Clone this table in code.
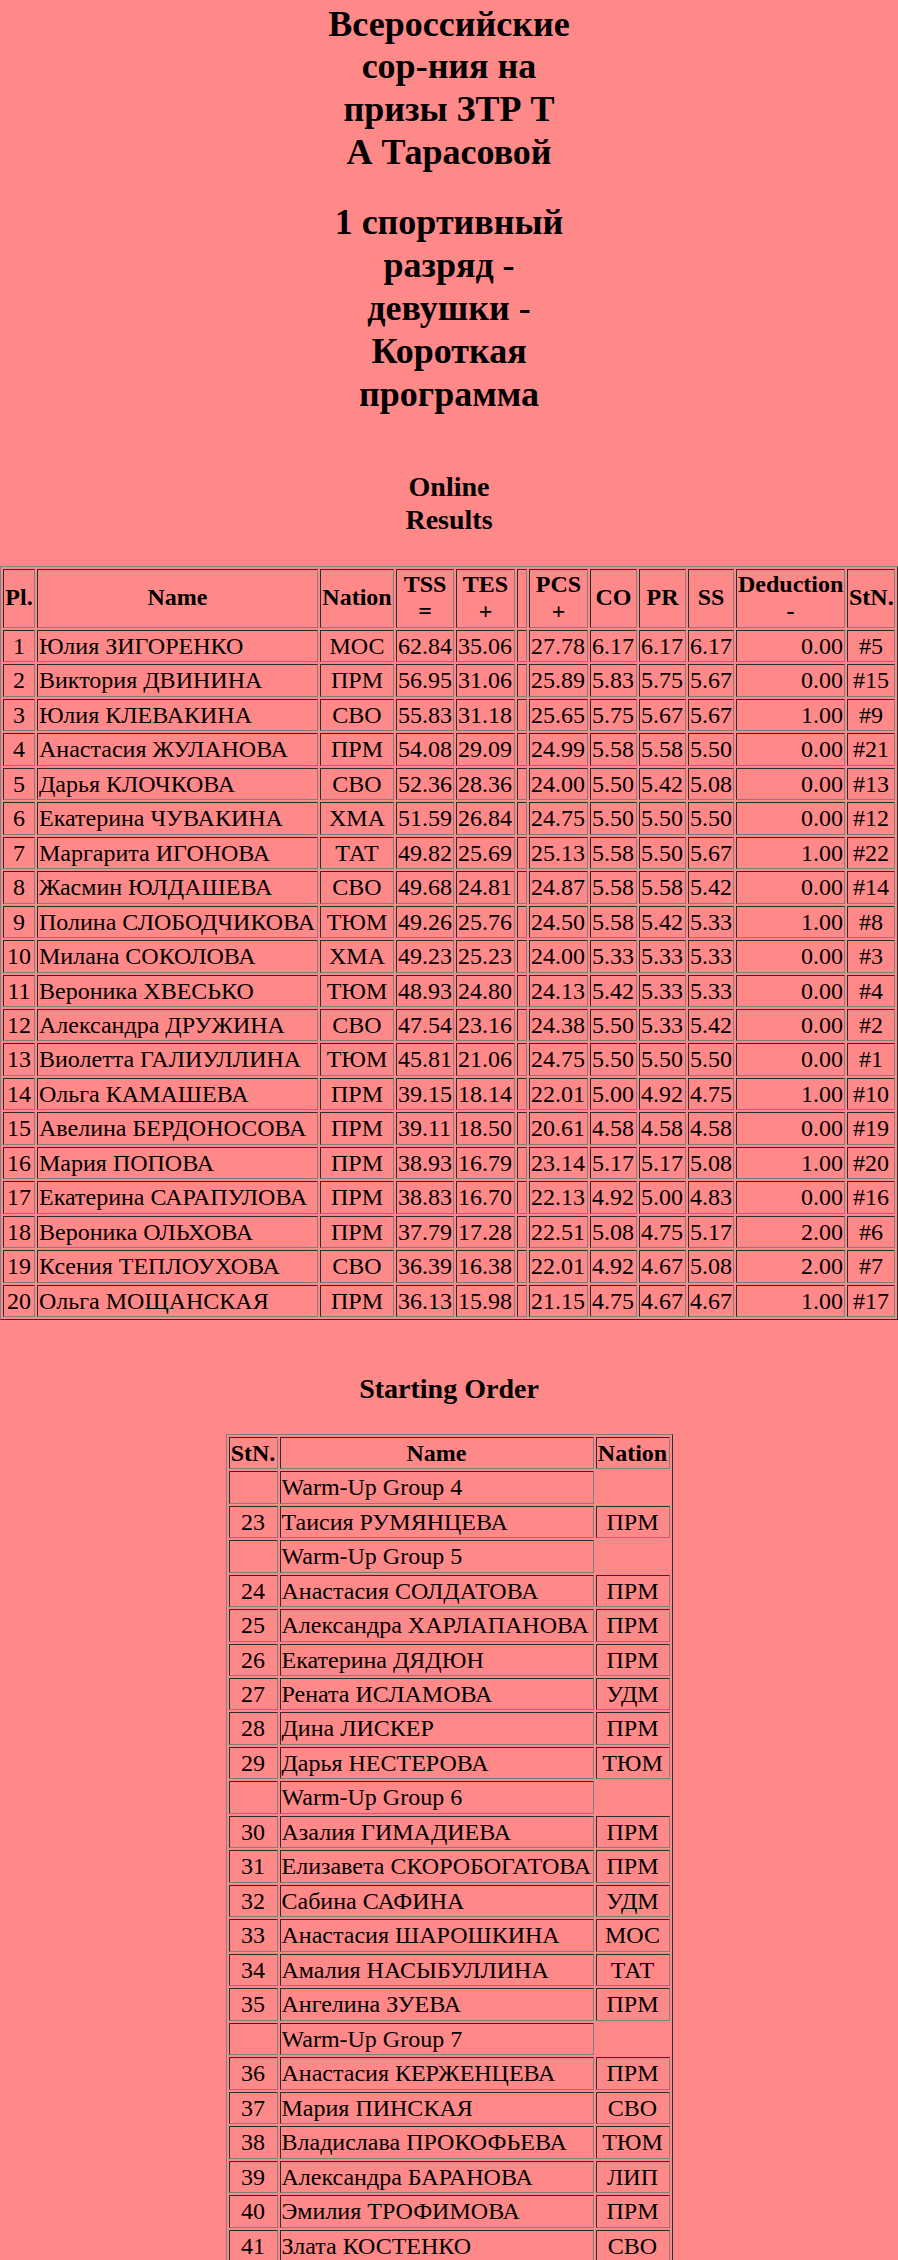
import React from "react";

const results: string[][] = [
  ["1", "Юлия ЗИГОРЕНКО", "МОС", "62.84", "35.06", "27.78", "6.17", "6.17", "6.17", "0.00", "#5"],
  ["2", "Виктория ДВИНИНА", "ПРМ", "56.95", "31.06", "25.89", "5.83", "5.75", "5.67", "0.00", "#15"],
  ["3", "Юлия КЛЕВАКИНА", "СВО", "55.83", "31.18", "25.65", "5.75", "5.67", "5.67", "1.00", "#9"],
  ["4", "Анастасия ЖУЛАНОВА", "ПРМ", "54.08", "29.09", "24.99", "5.58", "5.58", "5.50", "0.00", "#21"],
  ["5", "Дарья КЛОЧКОВА", "СВО", "52.36", "28.36", "24.00", "5.50", "5.42", "5.08", "0.00", "#13"],
  ["6", "Екатерина ЧУВАКИНА", "ХМА", "51.59", "26.84", "24.75", "5.50", "5.50", "5.50", "0.00", "#12"],
  ["7", "Маргарита ИГОНОВА", "ТАТ", "49.82", "25.69", "25.13", "5.58", "5.50", "5.67", "1.00", "#22"],
  ["8", "Жасмин ЮЛДАШЕВА", "СВО", "49.68", "24.81", "24.87", "5.58", "5.58", "5.42", "0.00", "#14"],
  ["9", "Полина СЛОБОДЧИКОВА", "ТЮМ", "49.26", "25.76", "24.50", "5.58", "5.42", "5.33", "1.00", "#8"],
  ["10", "Милана СОКОЛОВА", "ХМА", "49.23", "25.23", "24.00", "5.33", "5.33", "5.33", "0.00", "#3"],
  ["11", "Вероника ХВЕСЬКО", "ТЮМ", "48.93", "24.80", "24.13", "5.42", "5.33", "5.33", "0.00", "#4"],
  ["12", "Александра ДРУЖИНА", "СВО", "47.54", "23.16", "24.38", "5.50", "5.33", "5.42", "0.00", "#2"],
  ["13", "Виолетта ГАЛИУЛЛИНА", "ТЮМ", "45.81", "21.06", "24.75", "5.50", "5.50", "5.50", "0.00", "#1"],
  ["14", "Ольга КАМАШЕВА", "ПРМ", "39.15", "18.14", "22.01", "5.00", "4.92", "4.75", "1.00", "#10"],
  ["15", "Авелина БЕРДОНОСОВА", "ПРМ", "39.11", "18.50", "20.61", "4.58", "4.58", "4.58", "0.00", "#19"],
  ["16", "Мария ПОПОВА", "ПРМ", "38.93", "16.79", "23.14", "5.17", "5.17", "5.08", "1.00", "#20"],
  ["17", "Екатерина САРАПУЛОВА", "ПРМ", "38.83", "16.70", "22.13", "4.92", "5.00", "4.83", "0.00", "#16"],
  ["18", "Вероника ОЛЬХОВА", "ПРМ", "37.79", "17.28", "22.51", "5.08", "4.75", "5.17", "2.00", "#6"],
  ["19", "Ксения ТЕПЛОУХОВА", "СВО", "36.39", "16.38", "22.01", "4.92", "4.67", "5.08", "2.00", "#7"],
  ["20", "Ольга МОЩАНСКАЯ", "ПРМ", "36.13", "15.98", "21.15", "4.75", "4.67", "4.67", "1.00", "#17"],
];

type SO = { group?: string; n?: string; name?: string; nat?: string };
const order: SO[] = [
  { group: "Warm-Up Group 4" },
  { n: "23", name: "Таисия РУМЯНЦЕВА", nat: "ПРМ" },
  { group: "Warm-Up Group 5" },
  { n: "24", name: "Анастасия СОЛДАТОВА", nat: "ПРМ" },
  { n: "25", name: "Александра ХАРЛАПАНОВА", nat: "ПРМ" },
  { n: "26", name: "Екатерина ДЯДЮН", nat: "ПРМ" },
  { n: "27", name: "Рената ИСЛАМОВА", nat: "УДМ" },
  { n: "28", name: "Дина ЛИСКЕР", nat: "ПРМ" },
  { n: "29", name: "Дарья НЕСТЕРОВА", nat: "ТЮМ" },
  { group: "Warm-Up Group 6" },
  { n: "30", name: "Азалия ГИМАДИЕВА", nat: "ПРМ" },
  { n: "31", name: "Елизавета СКОРОБОГАТОВА", nat: "ПРМ" },
  { n: "32", name: "Сабина САФИНА", nat: "УДМ" },
  { n: "33", name: "Анастасия ШАРОШКИНА", nat: "МОС" },
  { n: "34", name: "Амалия НАСЫБУЛЛИНА", nat: "ТАТ" },
  { n: "35", name: "Ангелина ЗУЕВА", nat: "ПРМ" },
  { group: "Warm-Up Group 7" },
  { n: "36", name: "Анастасия КЕРЖЕНЦЕВА", nat: "ПРМ" },
  { n: "37", name: "Мария ПИНСКАЯ", nat: "СВО" },
  { n: "38", name: "Владислава ПРОКОФЬЕВА", nat: "ТЮМ" },
  { n: "39", name: "Александра БАРАНОВА", nat: "ЛИП" },
  { n: "40", name: "Эмилия ТРОФИМОВА", nat: "ПРМ" },
  { n: "41", name: "Злата КОСТЕНКО", nat: "СВО" },
];

const cell = "border border-[gray] [border-style:inset] p-px leading-[28.47px] whitespace-nowrap";
const th = "border border-[gray] [border-style:inset] p-px leading-[27.6px] font-bold text-center align-middle whitespace-nowrap";
const tableCls = "border-separate border-spacing-[2px] border border-[gray] [border-style:outset] table-fixed";

export default function App() {
  return (
    <div className="min-h-screen bg-[#ff8888] text-black font-['Liberation_Serif','Times_New_Roman',serif] text-[24px] pb-[4px]">
      <div className="pt-[2.5px] text-center font-bold text-[36px] leading-[42.9px]">
        Всероссийские
        <br />
        сор-ния на
        <br />
        призы ЗТР Т
        <br />А Тарасовой
      </div>
      <div className="mt-[27px] text-center font-bold text-[36px] leading-[42.9px]">
        1 спортивный
        <br />
        разряд -
        <br />
        девушки -
        <br />
        Короткая
        <br />
        программа
      </div>
      <div className="mt-[54px] text-center font-bold text-[28px] leading-[33px]">
        Online
        <br />
        Results
      </div>

      <table className={`${tableCls} w-full mt-[30px]`}>
        <thead>
          <tr>
            <th className={`${th} w-[32px]`}>Pl.</th>
            <th className={`${th} w-[281px]`}>Name</th>
            <th className={`${th} w-[74px]`}>Nation</th>
            <th className={`${th} w-[58px]`}>
              TSS
              <br />=
            </th>
            <th className={`${th} w-[59px]`}>
              TES
              <br />+
            </th>
            <th className={`${th} w-[10px]`}>&nbsp;</th>
            <th className={`${th} w-[59px]`}>
              PCS
              <br />+
            </th>
            <th className={`${th} w-[47px]`}>CO</th>
            <th className={`${th} w-[47px]`}>PR</th>
            <th className={`${th} w-[46px]`}>SS</th>
            <th className={`${th} w-[109px]`}>
              Deduction
              <br />-
            </th>
            <th className={`${th} w-[48px]`}>StN.</th>
          </tr>
        </thead>
        <tbody>
          {results.map((r) => (
            <tr key={r[0]}>
              <td className={`${cell} text-center`}>{r[0]}</td>
              <td className={`${cell} text-left`}>{r[1]}</td>
              <td className={`${cell} text-center`}>{r[2]}</td>
              <td className={`${cell} text-left`}>{r[3]}</td>
              <td className={`${cell} text-left`}>{r[4]}</td>
              <td className={`${cell}`}>&nbsp;</td>
              <td className={`${cell} text-left`}>{r[5]}</td>
              <td className={`${cell} text-left`}>{r[6]}</td>
              <td className={`${cell} text-left`}>{r[7]}</td>
              <td className={`${cell} text-left`}>{r[8]}</td>
              <td className={`${cell} text-right`}>{r[9]}</td>
              <td className={`${cell} text-center`}>{r[10]}</td>
            </tr>
          ))}
        </tbody>
      </table>

      <div className="mt-[52px] text-center font-bold text-[28px] leading-[33px]">Starting Order</div>

      <table className={`${tableCls} w-[447px] mx-auto mt-[28.5px]`}>
        <thead>
          <tr>
            <th className={`${th} leading-[28.47px] w-[49px]`}>StN.</th>
            <th className={`${th} leading-[28.47px] w-[314px]`}>Name</th>
            <th className={`${th} leading-[28.47px] w-[74px]`}>Nation</th>
          </tr>
        </thead>
        <tbody>
          {order.map((o, i) =>
            o.group ? (
              <tr key={i}>
                <td className={`${cell}`}>&nbsp;</td>
                <td className={`${cell} text-left`}>{o.group}</td>
              </tr>
            ) : (
              <tr key={i}>
                <td className={`${cell} text-center`}>{o.n}</td>
                <td className={`${cell} text-left`}>{o.name}</td>
                <td className={`${cell} text-center`}>{o.nat}</td>
              </tr>
            )
          )}
        </tbody>
      </table>
    </div>
  );
}
